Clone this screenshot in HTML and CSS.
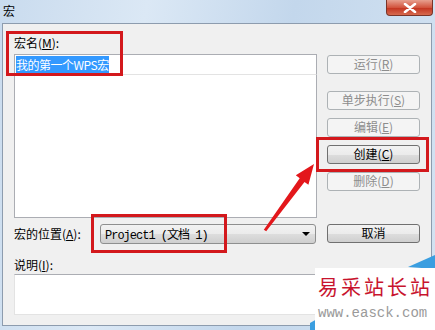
FILE: index.html
```html
<!DOCTYPE html>
<html lang="zh-CN">
<head>
    <meta charset="UTF-8">
    <title>宏</title>
    <link rel="stylesheet" href="styles.css">
</head>
<body>
    <div class="window">
        <div class="titlebar">
            <span class="title">宏</span>
            <div class="close">
                <svg width="14" height="10" viewBox="0 0 14 10">
                    <path d="M2 1 L12 9 M12 1 L2 9" stroke="#fff" stroke-width="2.6" stroke-linecap="round"/>
                </svg>
            </div>
        </div>
        <div class="client">
            <div class="main">
                <div class="left">
                    <div class="label">宏名(<u>M</u>):</div>
                    <div class="textbox"><span class="selected">我的第一个WPS宏</span></div>
                    <div class="listbox"></div>
                    <div class="loc-row">
                        <div class="label loc-label">宏的位置(<u>A</u>):</div>
                        <div class="combo">
                            <span class="combo-text">Project1 (文档 1)</span>
                            <span class="combo-arrow"></span>
                        </div>
                    </div>
                </div>
                <div class="buttons">
                    <div class="btn disabled">运行(<u>R</u>)</div>
                    <div class="btn disabled step">单步执行(<u>S</u>)</div>
                    <div class="btn disabled">编辑(<u>E</u>)</div>
                    <div class="btn">创建(<u>C</u>)</div>
                    <div class="btn disabled">删除(<u>D</u>)</div>
                    <div class="btn cancel">取消</div>
                </div>
            </div>
            <div class="label desc-label">说明(<u>I</u>):</div>
            <div class="desc"></div>
        </div>

        <!-- annotations drawn over the dialog -->
        <div class="mark mark-name"></div>
        <div class="mark mark-loc"></div>
        <div class="mark mark-create"></div>
        <svg class="arrow" width="435" height="330" viewBox="0 0 435 330">
            <polygon points="263.8,229.8 299.7,178.3 295.8,175.3 314,164 308.4,184.8 304.5,181.9 266.2,231.2" fill="#e3171b"/>
        </svg>

        <div class="watermark">
            <svg class="wm-corner" width="125" height="75" viewBox="0 0 125 75">
                <polygon points="98,12 125,0 125,14" fill="#3a9ee0"/>
                <polygon points="-12,75 14,60 14,75" fill="#3a9ee0"/>
            </svg>
            <div class="wm-panel">
                <div class="wm-name">易采站长站</div>
                <div class="wm-url">www.easck.com</div>
            </div>
        </div>
    </div>
</body>
</html>
```

FILE: styles.css
```css
body {
    margin: 0;
    font-family: "Noto Sans CJK SC", "DejaVu Sans", sans-serif;
    font-size: 12px;
    color: #000;
}

.window {
    position: relative;
    width: 435px;
    height: 330px;
    overflow: hidden;
    display: flex;
    flex-direction: column;
    background: linear-gradient(100deg, #c9dbee 0%, #dbe8f5 30%, #c3d7ec 60%, #d4e3f2 100%);
}

.titlebar {
    height: 23px;
    display: flex;
    justify-content: space-between;
    align-items: flex-start;
}

.title {
    padding: 3px 0 0 3px;
    font-size: 12px;
    line-height: 15px;
}

.close {
    width: 45px;
    height: 15px;
    margin-right: 2px;
    border: 1px solid #7a3428;
    border-top: none;
    border-radius: 0 0 4px 4px;
    background: linear-gradient(#e7a08f, #d2543e 50%, #c2321e 51%, #d66a4f);
    display: flex;
    align-items: center;
    justify-content: center;
}

.client {
    flex: 1;
    margin: 0 3px 4px 2px;
    border: 1px solid #8d9cae;
    background: #f0f0f0;
    padding: 11px 0 0 11px;
}

.main {
    display: flex;
    gap: 10px;
}

.left {
    width: 303px;
}

.label {
    height: 16px;
    line-height: 16px;
    margin-bottom: 3px;
}

.textbox {
    height: 21px;
    box-sizing: border-box;
    border: 1px solid #abadb3;
    background: #fff;
    padding: 2px 1px;
    line-height: 15px;
}

.selected {
    background: #3399ff;
    color: #fff;
    letter-spacing: -0.5px;
}

.listbox {
    height: 144px;
    margin-top: -1px;
    box-sizing: border-box;
    border: 1px solid #abadb3;
    border-top-color: #e3e3e3;
    background: #fff;
}

.loc-row {
    margin-top: 6px;
    display: flex;
    align-items: center;
}

.loc-label {
    width: 86px;
    margin-bottom: 0;
}

.combo {
    width: 216px;
    height: 20px;
    box-sizing: border-box;
    border: 1px solid #8e8f8f;
    border-radius: 3px;
    background: linear-gradient(#f2f2f2, #ebebeb 50%, #dddddd 51%, #cfcfcf);
    display: flex;
    align-items: center;
    justify-content: space-between;
    padding: 0 5px 0 4px;
}

.combo-text {
    font-family: "Liberation Mono", "Noto Sans CJK SC", monospace;
    font-size: 12px;
    letter-spacing: -1px;
}

.combo-arrow {
    width: 0;
    height: 0;
    border-left: 4px solid transparent;
    border-right: 4px solid transparent;
    border-top: 4px solid #000;
}

.buttons {
    width: 93px;
    padding-top: 20px;
    display: flex;
    flex-direction: column;
}

.btn {
    height: 19px;
    box-sizing: border-box;
    margin-top: 8px;
    border: 1px solid #707070;
    border-radius: 3px;
    background: linear-gradient(#f2f2f2, #ebebeb 50%, #dddddd 51%, #cfcfcf);
    text-align: center;
    line-height: 16px;
}

.btn:first-child {
    margin-top: 0;
}

.btn.step {
    margin-top: 17px;
}

.btn.cancel {
    margin-top: 33px;
}

.btn.disabled {
    border-color: #adb2b5;
    background: #f4f4f4;
    color: #8d8d8d;
}

.desc-label {
    margin-top: 13px;
    margin-bottom: 1px;
}

.desc {
    width: 406px;
    height: 41px;
    box-sizing: border-box;
    border: 1px solid #abadb3;
    border-color: #abadb3 #e3e3e3 #e3e3e3 #e3e3e3;
    background: #fff;
}

.mark {
    position: absolute;
    border: 3px solid #d3181c;
    box-sizing: border-box;
}

.mark-name {
    left: 6px;
    top: 31px;
    width: 117px;
    height: 45px;
}

.mark-loc {
    left: 91px;
    top: 214px;
    width: 136px;
    height: 39px;
}

.mark-create {
    left: 316px;
    top: 137px;
    width: 113px;
    height: 35px;
}

.arrow {
    position: absolute;
    left: 0;
    top: 0;
}

.watermark {
    position: absolute;
    left: 310px;
    top: 255px;
    width: 125px;
    height: 75px;
}

.wm-corner {
    position: absolute;
    left: 0;
    top: 0;
}

.wm-panel {
    position: absolute;
    left: 5px;
    top: 13px;
    width: 120px;
    height: 62px;
    background: #fff;
    overflow: hidden;
    white-space: nowrap;
}

.wm-name {
    padding: 8px 0 0 3px;
    font-family: "Noto Sans CJK SC", serif;
    font-size: 20px;
    line-height: 22px;
    letter-spacing: 3px;
    color: #c8142e;
}

.wm-url {
    padding: 8px 0 0 3px;
    font-family: "Liberation Mono", monospace;
    font-size: 14px;
    line-height: 14px;
    color: #9a9a9a;
}
```
